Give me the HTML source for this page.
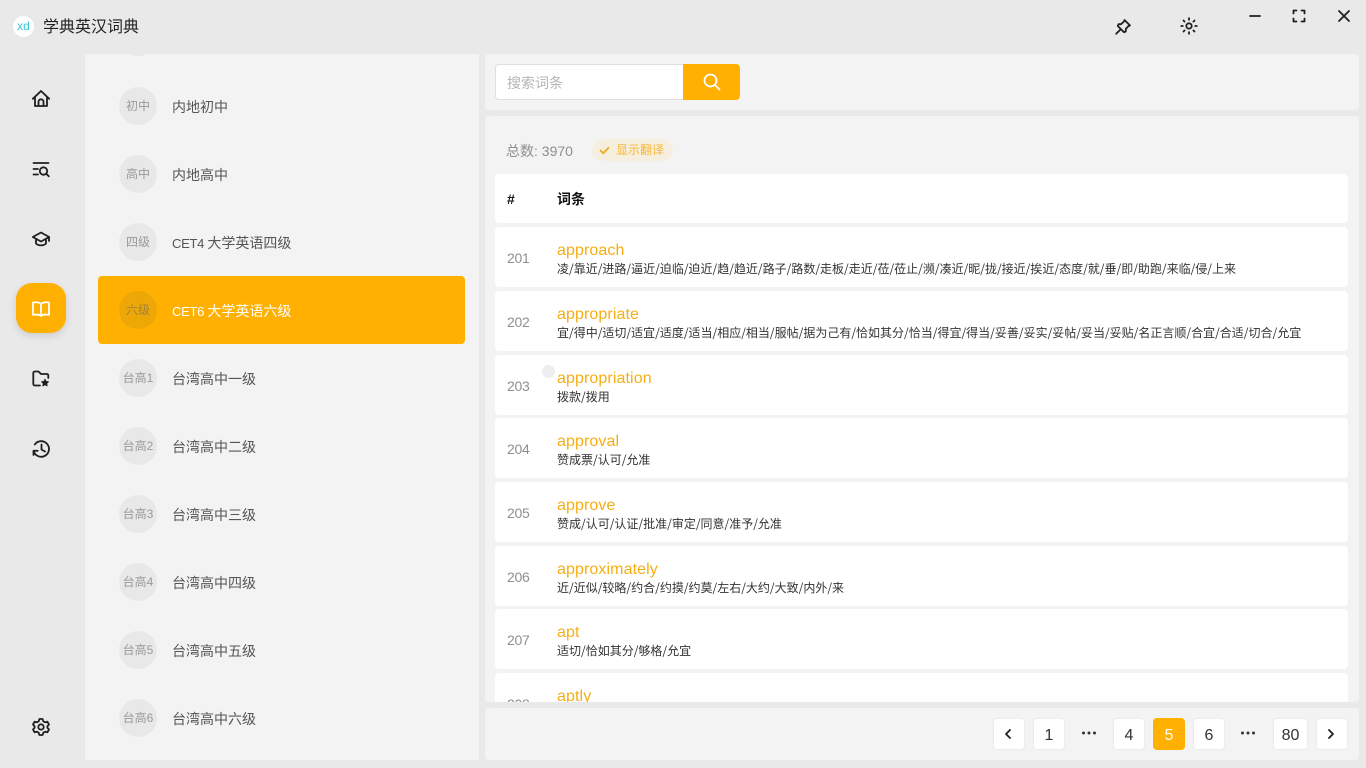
<!DOCTYPE html>
<html lang="zh-CN"><head><meta charset="utf-8"><title>学典英汉词典</title>
<style>
*{box-sizing:border-box}
html,body{margin:0;padding:0;width:1366px;height:768px;overflow:hidden;background:#e9e9e9;font-family:"Liberation Sans","Noto Sans CJK SC",sans-serif;color:#222}
.a{position:absolute}
svg{position:absolute;fill:none;stroke:#1f1f1f;stroke-width:1.8;stroke-linecap:round;stroke-linejoin:round}
.panel{position:absolute;background:#f3f3f3;border-radius:4px}
.item{position:absolute;left:98px;width:367px;height:68px;border-radius:4px}
.item.on{background:#ffb000;color:#fff}
.c{position:absolute;left:21px;top:15px;width:38px;height:38px;border-radius:50%;background:#e8e8e9;color:#9a9a9c;font-size:12px;line-height:38px;text-align:center;white-space:nowrap}
.on .c{background:#eda706;color:#a8823a}
.t{position:absolute;left:74px;top:5px;line-height:60px;font-size:14px;color:#555;white-space:nowrap}
.t span{font-size:13px;letter-spacing:-.3px}
.on .t{color:#fff}
.row{position:absolute;left:495px;width:853px;height:60px;background:#fff;border-radius:4px;overflow:hidden}
.n{position:absolute;left:12px;top:22px;font-size:14px;line-height:18px;color:#8f8f92;letter-spacing:-.3px}
.w{position:absolute;left:62px;top:13px;font-size:16px;line-height:22px;color:#f7ae14;white-space:nowrap;letter-spacing:.1px}
.d{position:absolute;left:62px;top:33px;font-family:"Noto Sans CJK SC",sans-serif;font-size:12px;line-height:18px;color:#333;white-space:nowrap}
.p{position:absolute;top:718px;height:32px;background:#fff;border:1px solid #ececec;border-radius:4px;text-align:center;line-height:33px;font-size:16px;color:#333}
</style></head><body>

<div class="a" style="left:13px;top:16px;width:21px;height:21px;border-radius:50%;background:#fff;color:#35c4d6;font-size:12px;line-height:20px;text-align:center">xd</div>
<div class="a" style="left:43px;top:16px;font-size:16px;line-height:24px;color:#222">学典英汉词典</div>

<svg style="left:1114px;top:18px" width="18" height="18" viewBox="0 0 18 18" stroke-width="1.5"><path d="M10.500 2 16 7.500 14.500 8 11.800 11 11.800 13.500 10 14.200 3.800 8 4.500 6.200 7 6.200 10 3.500ZM6.600 11.400 2.200 15.800"/></svg>
<svg style="left:1180px;top:17px" width="18" height="18" viewBox="0 0 18 18" stroke-width="1.5"><circle cx="9" cy="9" r="2.700"/><path d="M9 1.200V2.800M9 15.200v1.600M1.200 9H2.800M15.200 9h1.600M3.500 3.500l1.100 1.100M13.400 13.400l1.100 1.100M3.500 14.500l1.100-1.100M13.400 4.600l1.100-1.100"/></svg>
<svg style="left:1248px;top:9px" width="14" height="14" viewBox="0 0 14 14" stroke-width="1.300"><path d="M2 7H12"/></svg>
<svg style="left:1292px;top:9px" width="14" height="14" viewBox="0 0 14 14" stroke-width="1.300"><path d="M1.500 4.500V1.500H4.500M9.500 1.500H12.500V4.500M12.500 9.500V12.500H9.500M4.500 12.500H1.500V9.500"/></svg>
<svg style="left:1337px;top:9px" width="14" height="14" viewBox="0 0 14 14" stroke-width="1.300"><path d="M2 2 12 12M12 2 2 12"/></svg>

<svg style="left:31px;top:89px" width="20" height="20" viewBox="0 0 20 20"><path d="M1.800 9.800 10 2 18.200 9.800M4 8V17H16V8M7.500 17V12.800A2.500 2.500 0 0 1 12.500 12.800V17"/></svg>
<svg style="left:31px;top:160px" width="20" height="20" viewBox="0 0 20 20"><path d="M2.500 3H17.500M2.500 9H7M2.500 14.500H7"/><circle cx="12.500" cy="11" r="3.700"/><path d="M15.200 13.700 17.800 16.300"/></svg>
<svg style="left:31px;top:229px" width="20" height="20" viewBox="0 0 20 20"><path d="M10 3.500 1.800 8 10 12.500 18.200 8ZM5 10V14.500C7.500 17 12.500 17 15 14.500V10M18 8V12"/></svg>
<div class="a" style="left:16px;top:283px;width:50px;height:50px;border-radius:16px;background:#ffb000;box-shadow:0 3px 8px rgba(0,0,0,.12)"></div>
<svg style="left:31px;top:299px;stroke:#fff" width="20" height="20" viewBox="0 0 20 20"><path d="M10 5C8.500 3.500 5.500 3 2 3.500V15.800C5.500 15.300 8.500 15.500 10 17 11.500 15.500 14.500 15.300 18 15.800V3.500C14.500 3 11.500 3.500 10 5ZM10 5V17"/></svg>
<svg style="left:31px;top:369px" width="20" height="20" viewBox="0 0 20 20"><path d="M9 16.500H3.800A1.500 1.500 0 0 1 2.300 15V4A1.500 1.500 0 0 1 3.800 2.500H7.500L10 5H15.800A1.500 1.500 0 0 1 17.300 6.500V9"/><path d="M14 10.300 15 12.500 17.400 12.800 15.700 14.400 16.100 16.800 14 15.600 11.900 16.800 12.300 14.400 10.600 12.800 13 12.500Z" fill="#1f1f1f" stroke-width="1"/></svg>
<svg style="left:31px;top:439px" width="20" height="20" viewBox="0 0 20 20"><path d="M2.800 12.500A7.800 7.800 0 1 0 3.800 5.500M2.500 16V11.800H6.700M10.500 5.500V10.500L14 12.500"/></svg>
<svg style="left:31px;top:717px" width="20" height="20" viewBox="0 0 20 20"><circle cx="10" cy="10" r="2.700"/><path d="M8.400 2H11.600L12.300 4.300 14.200 5.300 16.400 4.700 18 7.500 16.400 9.200V10.800L18 12.500 16.400 15.300 14.200 14.700 12.300 15.700 11.600 18H8.400L7.700 15.700 5.800 14.700 3.600 15.300 2 12.500 3.600 10.800V9.200L2 7.500 3.600 4.700 5.800 5.300 7.700 4.300Z"/></svg>

<div class="a" style="left:85px;top:54px;width:394px;height:706px;background:#f3f3f3;overflow:hidden">
 <div class="a" style="left:34px;top:-36px;width:38px;height:38px;border-radius:50%;background:#e8e8e9"></div>
</div>

<div class="item" style="top:72px"><div class="c">初中</div><div class="t">内地初中</div></div>
<div class="item" style="top:140px"><div class="c">高中</div><div class="t">内地高中</div></div>
<div class="item" style="top:208px"><div class="c">四级</div><div class="t"><span>CET4 </span>大学英语四级</div></div>
<div class="item on" style="top:276px"><div class="c">六级</div><div class="t"><span>CET6 </span>大学英语六级</div></div>
<div class="item" style="top:344px"><div class="c">台高1</div><div class="t">台湾高中一级</div></div>
<div class="item" style="top:412px"><div class="c">台高2</div><div class="t">台湾高中二级</div></div>
<div class="item" style="top:480px"><div class="c">台高3</div><div class="t">台湾高中三级</div></div>
<div class="item" style="top:548px"><div class="c">台高4</div><div class="t">台湾高中四级</div></div>
<div class="item" style="top:616px"><div class="c">台高5</div><div class="t">台湾高中五级</div></div>
<div class="item" style="top:684px"><div class="c">台高6</div><div class="t">台湾高中六级</div></div>

<div class="panel" style="left:485px;top:54px;width:874px;height:56px"></div>
<div class="a" style="left:495px;top:64px;width:190px;height:36px;background:#fff;border:1px solid #dfdfdf;border-radius:4px 0 0 4px;font-size:14px;line-height:36px;padding-left:11px;color:#b5b5b8">搜索词条</div>
<div class="a" style="left:683px;top:64px;width:57px;height:36px;background:#ffb000;border-radius:0 4px 4px 0"></div>
<svg style="left:702px;top:72px;stroke:#fff" width="20" height="20" viewBox="0 0 20 20" stroke-width="1.600"><circle cx="8.500" cy="8.500" r="6"/><path d="M13 13 17.500 17.500"/></svg>

<div class="panel" style="left:485px;top:116px;width:874px;height:586px"></div>
<div class="a" style="left:506px;top:141px;font-size:14px;line-height:20px;color:#8f8f92">总数: 3970</div>
<div class="a" style="left:592px;top:139px;width:81px;height:22px;border-radius:11px;background:#f6efdf"></div>
<svg style="left:598px;top:144px;stroke:#f2a91c" width="13" height="13" viewBox="0 0 13 13" stroke-width="1.700"><path d="M2.500 6.500 5.300 9.300 10.500 3.800"/></svg>
<div class="a" style="left:616px;top:141px;font-size:12px;line-height:18px;color:#f7b733">显示翻译</div>

<div class="a" style="left:495px;top:174px;width:853px;height:49px;background:#fff;border-radius:4px"></div>
<div class="a" style="left:507px;top:190px;font-size:14px;line-height:18px;font-weight:bold;color:#111">#</div>
<div class="a" style="left:557px;top:190px;font-size:14px;line-height:18px;font-weight:bold;color:#111">词条</div>

<div class="row" style="top:227px"><div class="n">201</div><div class="w">approach</div><div class="d">凌/靠近/进路/逼近/迫临/迫近/趋/趋近/路子/路数/走板/走近/莅/莅止/濒/凑近/昵/拢/接近/挨近/态度/就/垂/即/助跑/来临/侵/上来</div></div>
<div class="row" style="top:291px"><div class="n">202</div><div class="w">appropriate</div><div class="d">宜/得中/适切/适宜/适度/适当/相应/相当/服帖/据为己有/恰如其分/恰当/得宜/得当/妥善/妥实/妥帖/妥当/妥贴/名正言顺/合宜/合适/切合/允宜</div></div>
<div class="row" style="top:355px"><div class="n">203</div><div class="w">appropriation</div><div class="d">拨款/拨用</div></div>
<div class="a" style="left:542px;top:365px;width:13px;height:13px;border-radius:50%;background:#eeeef0"></div>
<div class="row" style="top:418px"><div class="n">204</div><div class="w">approval</div><div class="d">赞成票/认可/允准</div></div>
<div class="row" style="top:482px"><div class="n">205</div><div class="w">approve</div><div class="d">赞成/认可/认证/批准/审定/同意/准予/允准</div></div>
<div class="row" style="top:546px"><div class="n">206</div><div class="w">approximately</div><div class="d">近/近似/较略/约合/约摸/约莫/左右/大约/大致/内外/来</div></div>
<div class="row" style="top:609px"><div class="n">207</div><div class="w">apt</div><div class="d">适切/恰如其分/够格/允宜</div></div>
<div class="row" style="top:673px;height:29px;border-radius:4px 4px 0 0"><div class="n">208</div><div class="w">aptly</div></div>

<div class="panel" style="left:485px;top:708px;width:874px;height:52px"></div>
<div class="p" style="left:993px;width:32px"></div>
<svg style="left:1000px;top:726px" width="16" height="16" viewBox="0 0 16 16" stroke-width="2"><path d="M10 4 6 8 10 12"/></svg>
<div class="p" style="left:1033px;width:32px">1</div>
<svg style="left:1081px;top:730px;stroke:none;fill:#333" width="16" height="6" viewBox="0 0 16 6"><circle cx="2.500" cy="3" r="1.500"/><circle cx="8" cy="3" r="1.500"/><circle cx="13.500" cy="3" r="1.500"/></svg>
<div class="p" style="left:1113px;width:32px">4</div>
<div class="p" style="left:1153px;width:32px;background:#ffb000;border-color:#ffb000;color:#fff">5</div>
<div class="p" style="left:1193px;width:32px">6</div>
<svg style="left:1240px;top:730px;stroke:none;fill:#333" width="16" height="6" viewBox="0 0 16 6"><circle cx="2.500" cy="3" r="1.500"/><circle cx="8" cy="3" r="1.500"/><circle cx="13.500" cy="3" r="1.500"/></svg>
<div class="p" style="left:1273px;width:35px">80</div>
<div class="p" style="left:1316px;width:32px"></div>
<svg style="left:1323px;top:726px" width="16" height="16" viewBox="0 0 16 16" stroke-width="2"><path d="M6 4 10 8 6 12"/></svg>
</body></html>
